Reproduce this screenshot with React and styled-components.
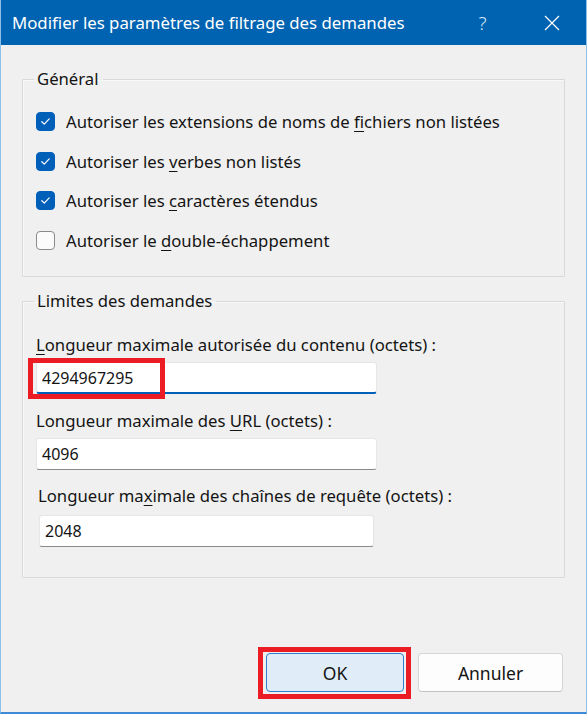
import React from 'react';
import styled, { createGlobalStyle } from 'styled-components';

const Global = createGlobalStyle`
  html, body {
    margin: 0;
    padding: 0;
    background: #f0f0f0;
  }
  * {
    box-sizing: border-box;
  }
`;

const Window = styled.div`
  width: 587px;
  height: 714px;
  display: flex;
  flex-direction: column;
  background: #f0f0f0;
  border-left: 1px solid #8fc0ea;
  border-right: 1px solid #8fc0ea;
  border-bottom: 2px solid #3d8ad6;
  font-family: "Noto Sans", "Liberation Sans", sans-serif;
  font-size: 16.7px;
  color: #141414;
`;

const TitleBar = styled.div`
  height: 45px;
  flex: none;
  display: flex;
  align-items: center;
  background: #0063b1;
  color: #ffffff;
  padding-left: 11px;
`;

const Title = styled.div`
  flex: 1;
  font-size: 16.8px;
  white-space: nowrap;
`;

const TitleButton = styled.div`
  width: 69px;
  height: 45px;
  display: flex;
  align-items: center;
  justify-content: center;
  font-size: 19px;
  font-weight: 300;
  color: #d9e8f5;
`;

const Content = styled.div`
  flex: 1;
  display: flex;
  flex-direction: column;
  padding: 24px 21px 0 21px;
`;

const Group = styled.fieldset`
  margin: 0 0 14px 0;
  padding: ${(p) => p.$pad};
  border: 1px solid #d9d9d9;
  box-shadow: inset 1px 1px 0 #f8f8f8;
  border-radius: 1px;
  display: flex;
  flex-direction: column;
`;

const Legend = styled.legend`
  margin-left: -2px;
  padding: 0 4px 0 3px;
  line-height: 20px;
`;

const CheckRow = styled.label`
  height: 39.5px;
  display: flex;
  align-items: center;
  gap: 11px;
  white-space: nowrap;
`;

const Box = styled.span`
  width: 19px;
  height: 19px;
  flex: none;
  border-radius: 4px;
  display: flex;
  align-items: center;
  justify-content: center;
  background: ${(p) => (p.$checked ? '#005fb8' : '#fbfbfb')};
  border: 1px solid ${(p) => (p.$checked ? '#005fb8' : '#8a8a8a')};
`;

const Key = styled.span`
  text-decoration: underline;
  text-underline-offset: 3px;
`;

const FieldLabel = styled.div`
  line-height: 20px;
  white-space: nowrap;
  margin: ${(p) => p.$margin};
  padding-left: ${(p) => p.$indent || 0}px;
`;

const FieldWrap = styled.div`
  position: relative;
  margin-left: ${(p) => p.$indent || 0}px;
  width: ${(p) => p.$width}px;
`;

const Input = styled.div`
  height: 32px;
  display: flex;
  align-items: center;
  padding-left: 5px;
  background: #ffffff;
  border: 1px solid #e6e6e6;
  border-bottom: ${(p) => (p.$focused ? '2px solid #005fb8' : '1px solid #8a8a8a')};
  border-radius: 3px;
  font-size: 16px;
  color: #141414;
`;

const Highlight = styled.div`
  position: absolute;
  border: 5px solid #ec1c24;
  pointer-events: none;
`;

const Footer = styled.div`
  margin-top: auto;
  display: flex;
  justify-content: flex-end;
  gap: 14px;
  padding: 0 23px 20px 0;
`;

const BtnWrap = styled.div`
  position: relative;
`;

const Button = styled.button`
  width: ${(p) => p.$width}px;
  height: 39px;
  font-family: inherit;
  font-size: 17.5px;
  color: #141414;
  border-radius: 4px;
  background: ${(p) => (p.$primary ? '#e0edf8' : '#fdfdfd')};
  border: 1px solid ${(p) => (p.$primary ? '#2f7fd0' : '#d6d6d6')};
  border-bottom-color: ${(p) => (p.$primary ? '#2f7fd0' : '#c2c2c2')};
`;

const Check = () => (
  <svg width="11" height="9" viewBox="0 0 11 9">
    <path d="M1.8 4.7 L4.3 7.1 L9.2 1.9" fill="none" stroke="#ffffff" strokeWidth="1.2" strokeLinecap="round" strokeLinejoin="round" />
  </svg>
);

const CloseIcon = () => (
  <svg width="16" height="16" viewBox="0 0 16 16">
    <path d="M1 1 L15 15 M15 1 L1 15" stroke="#ffffff" strokeWidth="1.2" />
  </svg>
);

const options = [
  { pre: 'Autoriser les extensions de noms de ', key: 'f', post: 'ichiers non listées', checked: true },
  { pre: 'Autoriser les ', key: 'v', post: 'erbes non listés', checked: true },
  { pre: 'Autoriser les ', key: 'c', post: 'aractères étendus', checked: true },
  { pre: 'Autoriser le ', key: 'd', post: 'ouble-échappement', checked: false },
];

export default function App() {
  return (
    <>
      <Global />
      <Window>
        <TitleBar>
          <Title>Modifier les paramètres de filtrage des demandes</Title>
          <TitleButton>?</TitleButton>
          <TitleButton><CloseIcon /></TitleButton>
        </TitleBar>
        <Content>
          <Group $pad="13px 13px 16px 13px">
            <Legend>Général</Legend>
            {options.map((o, i) => (
              <CheckRow key={i}>
                <Box $checked={o.checked}>{o.checked && <Check />}</Box>
                <span>{o.pre}<Key>{o.key}</Key>{o.post}</span>
              </CheckRow>
            ))}
          </Group>
          <Group $pad="24px 13px 30px 13px">
            <Legend>Limites des demandes</Legend>
            <FieldLabel $margin="0 0 7px 0"><Key>L</Key>ongueur maximale autorisée du contenu (octets) :</FieldLabel>
            <FieldWrap $width={341}>
              <Input $focused>4294967295</Input>
              <Highlight style={{ left: -8, top: -4, width: 137, height: 41 }} />
            </FieldWrap>
            <FieldLabel $margin="17px 0 7px 0">Longueur maximale des <Key>U</Key>RL (octets) :</FieldLabel>
            <FieldWrap $width={341}>
              <Input>4096</Input>
            </FieldWrap>
            <FieldLabel $margin="16px 0 9px 0" $indent={2}>Longueur ma<Key>x</Key>imale des chaînes de requête (octets) :</FieldLabel>
            <FieldWrap $width={335} $indent={3}>
              <Input>2048</Input>
            </FieldWrap>
          </Group>
        </Content>
        <Footer>
          <BtnWrap>
            <Button $primary $width={138}>OK</Button>
            <Highlight style={{ left: -8, top: -6, right: -7, bottom: -7 }} />
          </BtnWrap>
          <Button $width={145}>Annuler</Button>
        </Footer>
      </Window>
    </>
  );
}
